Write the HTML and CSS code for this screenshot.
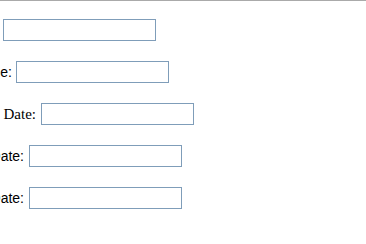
FILE: index.html
```html
<!DOCTYPE html>
<html>
<head>
<meta charset="utf-8">
<link rel="stylesheet" href="styles.css">
</head>
<body>
<form class="form">
  <div class="row row-plain">
    <input class="field" type="text">
  </div>
  <div class="row">
    <span class="label label-short">Name:</span>
    <input class="field" type="text">
  </div>
  <div class="row">
    <span class="label label-serif">Date:</span>
    <input class="field" type="text">
  </div>
  <div class="row">
    <span class="label label-sans">Start Date:</span>
    <input class="field" type="text">
  </div>
  <div class="row">
    <span class="label label-sans">End Date:</span>
    <input class="field" type="text">
  </div>
</form>
</body>
</html>
```

FILE: styles.css
```css
html, body {
  margin: 0;
  padding: 0;
  background: #ffffff;
}

body {
  border-top: 1px solid #aaaaaa;
  overflow: hidden;
}

.form {
  display: flex;
  flex-direction: column;
  gap: 20px;
  padding-top: 18px;
  margin: 0;
}

.row {
  display: flex;
  align-items: center;
  height: 22px;
}

.row-plain {
  padding-left: 3px;
}

.label {
  flex: none;
  display: flex;
  justify-content: flex-end;
  white-space: nowrap;
  color: #000000;
}

.label-short {
  width: 12px;
  margin-right: 4px;
  font-family: "Liberation Sans", Arial, sans-serif;
  font-size: 14px;
}

.label-serif {
  width: 33px;
  margin-left: 3px;
  margin-right: 5px;
  font-family: "Liberation Serif", "Times New Roman", serif;
  font-size: 15px;
}

.label-sans {
  width: 24px;
  margin-right: 5px;
  font-family: "Liberation Sans", Arial, sans-serif;
  font-size: 14px;
}

.field {
  flex: none;
  box-sizing: border-box;
  width: 153px;
  height: 22px;
  margin: 0;
  padding: 0 2px;
  border: 1px solid #7f9db9;
  border-radius: 0;
  background: #ffffff;
  outline: none;
}
```
